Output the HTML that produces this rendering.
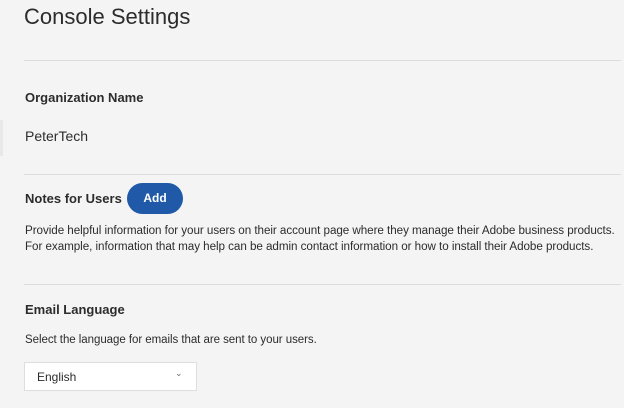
<!DOCTYPE html>
<html><head><style>
body{margin:0;width:624px;height:408px;background:#f4f4f4;font-family:"Liberation Sans",sans-serif;color:#2c2c2c;position:relative;overflow:hidden}
div{position:absolute;white-space:nowrap}
.hr{left:24px;width:597px;height:1px;background:#dcdcdc}
.h{font-size:13px;font-weight:bold;color:#2c2c2c}
.p{font-size:11.65px;color:#2c2c2c;letter-spacing:-0.05px}
</style></head><body>
<div style="left:24px;top:4px;font-size:22px;font-weight:300;color:#2c2c2c">Console Settings</div>
<div class="hr" style="top:60px"></div>
<div class="h" style="left:25px;top:90px">Organization Name</div>
<div style="left:25px;top:128px;font-size:14px">PeterTech</div>
<div style="left:0;top:120px;width:3px;height:36px;background:#e8e8e8"></div>
<div class="hr" style="top:174px"></div>
<div class="h" style="left:25px;top:191px">Notes for Users</div>
<div style="left:127px;top:183px;width:56px;height:31px;border-radius:16px;background:#1f59a8;color:#fff;font-size:12px;font-weight:bold;text-align:center;line-height:31px">Add</div>
<div class="p" style="left:25px;top:224px">Provide helpful information for your users on their account page where they manage their Adobe business products.</div>
<div class="p" style="left:25px;top:240px">For example, information that may help can be admin contact information or how to install their Adobe products.</div>
<div class="hr" style="top:284px"></div>
<div class="h" style="left:25px;top:302px">Email Language</div>
<div class="p" style="left:25px;top:334px;font-size:11.5px">Select the language for emails that are sent to your users.</div>
<div style="left:24px;top:362px;width:171px;height:27px;background:#fff;border:1px solid #dedede"></div>
<div style="left:37px;top:370px;font-size:12px">English</div>
<div style="left:175px;top:368px;font-size:9px;color:#666">&#8964;</div>
</body></html>
